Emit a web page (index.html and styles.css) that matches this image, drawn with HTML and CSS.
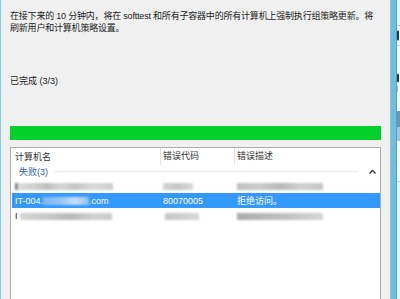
FILE: index.html
```html
<!DOCTYPE html>
<html lang="zh-CN">
<head>
<meta charset="UTF-8">
<title>组策略更新</title>
<link rel="stylesheet" href="styles.css">
</head>
<body>
  <div class="screen">
    <div class="edge-left"></div>

    <div class="dialog">
      <p class="message">在接下来的 10 分钟内，将在 softtest 和所有子容器中的所有计算机上强制执行组策略更新。将刷新用户和计算机策略设置。</p>
      <p class="status">已完成 (3/3)</p>

      <div class="progress"></div>

      <div class="listview">
        <div class="lv-header">
          <div class="col col-name">计算机名</div>
          <div class="col col-code">错误代码</div>
          <div class="col col-desc">错误描述</div>
        </div>

        <div class="lv-group">
          <span class="group-title">失败(3)</span>
          <span class="group-line"></span>
          <svg class="chevron" width="7" height="5" viewBox="0 0 7 5">
            <polyline points="0.5,4.5 3.5,1.5 6.5,4.5" fill="none" stroke="#333" stroke-width="1.3"/>
          </svg>
        </div>

        <div class="lv-row">
          <div class="col col-name"><span class="smear smear-a"></span></div>
          <div class="col col-code"><span class="smear smear-b"></span></div>
          <div class="col col-desc"><span class="smear smear-c"></span></div>
        </div>

        <div class="lv-row selected">
          <div class="col col-name">IT-004.<span class="smear smear-sel"></span>.com</div>
          <div class="col col-code">80070005</div>
          <div class="col col-desc">拒绝访问。</div>
        </div>

        <div class="lv-row">
          <div class="col col-name">I<span class="smear smear-d"></span></div>
          <div class="col col-code"><span class="smear smear-e"></span></div>
          <div class="col col-desc"><span class="smear smear-f"></span></div>
        </div>
      </div>
    </div>

    <div class="dialog-border"></div>
    <div class="frame"></div>

    <!-- the window behind, only a sliver shows -->
    <div class="behind">
      <div class="b-gray" style="height: 25px"></div>
      <div class="b-line"></div>
      <div class="b-white b-text" style="height: 19px"></div>
      <div class="b-line"></div>
      <div class="b-white" style="height: 24px"></div>
      <div class="b-white b-text" style="height: 16px"></div>
      <div class="b-white b-faint" style="height: 6px"></div>
      <div class="b-yellow" style="height: 19px"></div>
      <div class="b-blue" style="height: 16px"></div>
      <div class="b-lightblue" style="height: 14px"></div>
      <div class="b-white" style="height: 8px"></div>
      <div class="b-yellow" style="height: 15px"></div>
      <div class="b-white" style="height: 17px"></div>
      <div class="b-line"></div>
      <div class="b-gray b-fill"></div>
    </div>
  </div>
</body>
</html>
```

FILE: styles.css
```css
body {
  margin: 0;
  font-family: "Liberation Sans", "Noto Sans CJK SC", sans-serif;
  font-size: 9px;
  color: #1a1a1a;
  background-color: #f0f0f0;
  overflow: hidden;
}

.screen {
  display: flex;
  width: 400px;
  height: 299px;
  overflow: hidden;
}

.edge-left {
  width: 1px;
  background-color: #7fcfec;
}

.dialog {
  width: 390px;
  padding: 10px 9px 0 9px;
  box-sizing: border-box;
  display: flex;
  flex-direction: column;
}

.message {
  margin: 0;
  line-height: 12px;
  letter-spacing: -0.2px;
}

.status {
  margin: 41px 0 0 0;
  line-height: 12px;
}

.progress {
  margin-top: 39px;
  height: 14px;
  background-color: #02d12b;
}

.listview {
  margin-top: 7px;
  flex: 1;
  background-color: #fff;
  border: 1px solid #acacac;
  border-bottom: none;
  padding-left: 1px;
}

.lv-header {
  display: flex;
  height: 17px;
  align-items: center;
  color: #333;
}

.col {
  white-space: nowrap;
  box-sizing: border-box;
}

.col-name {
  width: 148px;
  padding-left: 3px;
}

.col-code {
  width: 74px;
  padding-left: 3px;
}

.col-desc {
  flex: 1;
  padding-left: 3px;
}

.lv-header .col-code,
.lv-header .col-desc {
  border-left: 1px solid #e3e3e3;
  padding-left: 2px;
  height: 17px;
  line-height: 17px;
}

.lv-group {
  display: flex;
  align-items: center;
  height: 13px;
  padding-left: 7px;
  padding-right: 4px;
}

.group-title {
  color: #2d5fb0;
}

.group-line {
  flex: 1;
  height: 1px;
  margin: 0 11px 0 6px;
  background-color: #e6ebf4;
}

.chevron {
  display: block;
}

.lv-row {
  display: flex;
  align-items: center;
  height: 15px;
}

.lv-row.selected {
  background-color: #3399ff;
  color: #fff;
}

.smear {
  display: inline-block;
  height: 7px;
  vertical-align: middle;
  filter: blur(0.8px);
}

.smear-a {
  width: 98px;
  background: linear-gradient(90deg, #777 0, #777 2px, #ddd 3px, #cfcfcf 20px, #bdbdbd 32px, #d6d6d6 45px, #c4c4c4 60px, #d9d9d9 78px, #cfcfcf 98px);
}

.smear-b {
  width: 30px;
  background: linear-gradient(90deg, #d4d4d4, #c6c6c6 50%, #dadada);
}

.smear-c {
  width: 86px;
  background: linear-gradient(90deg, #bfbfbf, #cccccc 25%, #b8b8b8 50%, #d0d0d0 75%, #c4c4c4);
}

.smear-sel {
  width: 46px;
  height: 8px;
  background: linear-gradient(90deg, #7fb8f2, #98c6f6 40%, #c8e0fa 70%, #8fc0f5);
}

.smear-d {
  width: 92px;
  margin-left: 2px;
  background: linear-gradient(90deg, #d6d6d6, #c8c8c8 30%, #b9b9b9 55%, #d2d2d2 80%, #cacaca);
}

.smear-e {
  width: 34px;
  margin-left: 2px;
  background: linear-gradient(90deg, #c6c6c6, #d8d8d8);
}

.smear-f {
  width: 86px;
  background: linear-gradient(90deg, #aaa, #b8b8b8 30%, #c2c2c2 60%, #d6d6d6);
}

.dialog-border {
  width: 1px;
  background-color: #b4b4b4;
}

.frame {
  width: 5px;
  background-color: #62c3e7;
  border-right: 1px solid #4aa6cf;
}

.behind {
  width: 3px;
  display: flex;
  flex-direction: column;
}

.b-gray {
  background-color: #f0f0f0;
}

.b-fill {
  flex: 1;
}

.b-line {
  height: 1px;
  background-color: #c8c8c8;
}

.b-white {
  background-color: #fff;
}

.b-text {
  background: linear-gradient(180deg, #fff 20%, #333 30%, #333 70%, #fff 80%);
  background-size: 2px 100%;
  background-repeat: no-repeat;
  background-color: #fff;
}

.b-faint {
  background: linear-gradient(90deg, #bbb 1px, #fff 1px);
}

.b-yellow {
  background-color: #fdf6dc;
}

.b-blue {
  background-color: #7893ad;
}

.b-lightblue {
  background-color: #aec0d1;
}
```
